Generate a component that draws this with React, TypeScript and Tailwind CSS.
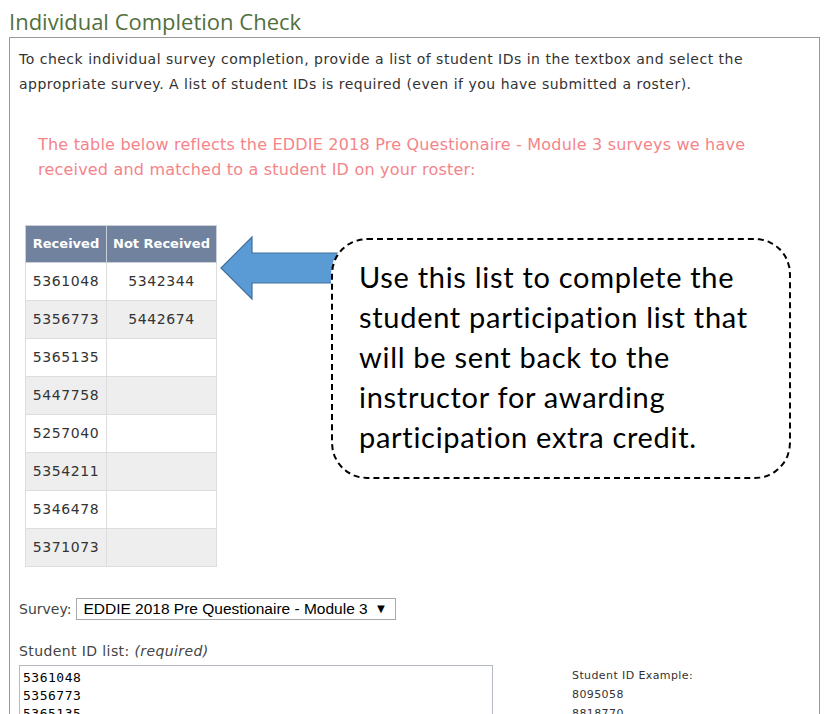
import React from "react";

const received = ["5361048", "5356773", "5365135", "5447758", "5257040", "5354211", "5346478", "5371073"];
const notReceived = ["5342344", "5442674"];

function ResultsTable() {
  return (
    <table className="mt-[43px] ml-[6px] border-collapse text-[14px] tracking-[0.6px] text-[#333]">
      <thead>
        <tr className="bg-[#70829e] text-white h-[37px] text-[13px] tracking-normal">
          <th className="border border-[#c8cfd9] w-[81px] px-0 font-bold">Received</th>
          <th className="border border-[#c8cfd9] w-[110px] px-0 font-bold">Not Received</th>
        </tr>
      </thead>
      <tbody>
        {received.map((id, i) => (
          <tr key={id} className={`h-[38px] ${i % 2 === 1 ? "bg-[#eeeeee]" : "bg-white"}`}>
            <td className="border border-[#dddddd] text-center">{id}</td>
            <td className="border border-[#dddddd] text-center">{notReceived[i] ?? ""}</td>
          </tr>
        ))}
      </tbody>
    </table>
  );
}

function Callout() {
  return (
    <>
      {/* blue arrow pointing back at the table */}
      <svg className="absolute left-[219px] top-[235px]" width="130" height="66" viewBox="0 0 130 66">
        <polygon
          points="2,33 33,2 33,18 128,18 128,48 33,48 33,64"
          fill="#5b9bd5"
          stroke="#41719c"
          strokeWidth="1.2"
        />
      </svg>
      <div className="absolute left-[331px] top-[238px] w-[460px] h-[241px] rounded-[36px] border-2 border-dashed border-black bg-white pl-[26px] pt-[17px] font-['Lato',sans-serif] text-[29px] leading-[40px] tracking-[0.7px] text-black">
        Use this list to complete the
        <br />
        student participation list that
        <br />
        will be sent back to the
        <br />
        instructor for awarding
        <br />
        participation extra credit.
      </div>
    </>
  );
}

export default function App() {
  return (
    <div className="relative w-[838px] h-[714px] overflow-hidden bg-white font-['DejaVu_Sans',sans-serif]">
      <h1 className="pl-[9px] pt-[7px] font-['Open_Sans',sans-serif] text-[22px] leading-[28px] text-[#52703d]">
        Individual Completion Check
      </h1>
      <div className="ml-[9px] mt-[2px] w-[811px] h-[680px] border border-b-0 border-[#999999] pl-[9px] pt-[9px]">
        <p className="text-[14px] leading-[25px] tracking-[0.5px] text-[#333]">
          To check individual survey completion, provide a list of student IDs in the textbox and select the
          <br />
          appropriate survey. A list of student IDs is required (even if you have submitted a roster).
        </p>
        <p className="mt-[35px] ml-[19px] text-[16px] leading-[25px] tracking-[0.2px] text-[#f5848a]">
          The table below reflects the EDDIE 2018 Pre Questionaire - Module 3 surveys we have
          <br />
          received and matched to a student ID on your roster:
        </p>
        <ResultsTable />
        <div className="mt-[31px] flex items-center gap-[5px] text-[14px] text-[#444]">
          <span>Survey:</span>
          <div className="flex h-[22px] w-[320px] items-center justify-between border border-[#a9a9a9] bg-white pl-[6px] pr-[8px] font-['Liberation_Sans',sans-serif] text-[15.5px] text-black">
            <span>EDDIE 2018 Pre Questionaire - Module 3</span>
            <span className="text-[13px]">▼</span>
          </div>
        </div>
        <div className="mt-[21px] text-[14px] leading-[20px] tracking-[0.4px] text-[#444]">
          Student ID list: <em>(required)</em>
        </div>
        <div className="mt-[4px] flex">
          <div className="h-[60px] w-[474px] border border-[#b5b9c2] px-[3px] pt-[3px] font-['DejaVu_Sans_Mono',monospace] text-[13px] leading-[18px] tracking-[0.5px] text-black">
            5361048
            <br />
            5356773
            <br />
            5365135
          </div>
          <div className="ml-[79px] pt-[1px] text-[11px] leading-[19px] tracking-[0.4px] text-[#333]">
            Student ID Example:
            <br />
            8095058
            <br />
            8818770
          </div>
        </div>
      </div>
      <Callout />
    </div>
  );
}
